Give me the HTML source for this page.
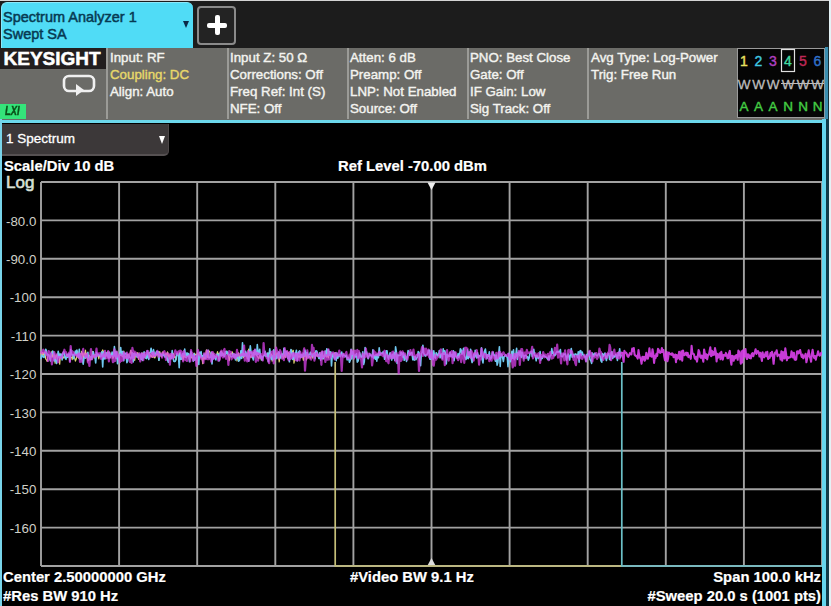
<!DOCTYPE html>
<html><head><meta charset="utf-8">
<style>
*{margin:0;padding:0;box-sizing:border-box}
html,body{width:831px;height:606px;overflow:hidden;background:#000;font-family:"Liberation Sans",sans-serif}
.abs{position:absolute}
#top{position:absolute;left:0;top:0;width:831px;height:48px;background:#1c1c1c;border-top:1px solid #d4d4d4}
#tab{position:absolute;left:1px;top:2px;width:192px;height:46px;background:#50dcf6;border-radius:6px 6px 0 0;border-top:1px solid #8ae8fa;border-left:1px solid #8ae8fa}
#tab .t{position:absolute;left:1px;color:#073a52;font-size:14.5px;white-space:nowrap;-webkit-text-stroke:0.5px #073a52}
#tab .arr{position:absolute;left:181px;top:18px;width:0;height:0;border-left:3px solid transparent;border-right:3px solid transparent;border-top:7px solid #0b2a48}
#plus{position:absolute;left:197px;top:6px;width:39px;height:39px;background:#232323;border:2px solid #8a8a8a;border-radius:4px}
#plus .h{position:absolute;left:8px;top:14.5px;width:20px;height:5px;background:#fff;border-radius:2px}
#plus .v{position:absolute;left:15.5px;top:7px;width:5px;height:20px;background:#fff;border-radius:2px}
#hdr{position:absolute;left:0;top:48px;width:827px;height:72px;background:#6b6b67}
.col{position:absolute;top:48px;height:71px;border-left:2px solid #9b9b97}
.ht{position:absolute;color:#f4f4f0;font-size:13.3px;white-space:nowrap;line-height:17px;-webkit-text-stroke:0.4px currentColor}
#ks{position:absolute;left:0;top:48px;width:106px;height:21px;background:#221e1e;color:#fff;font-weight:bold;font-size:19px;line-height:21px;padding-left:3.5px;letter-spacing:0px;-webkit-text-stroke:0.5px #fff}
#lxi{position:absolute;left:0;top:104px;width:25.5px;height:15px;background:#34e47a;color:#0a5018;font-style:italic;font-weight:bold;font-size:12px;line-height:15px;text-align:center}
#lxi span{display:inline-block;transform:scaleX(0.78);-webkit-text-stroke:0.4px #0a5018}
#trc{position:absolute;left:737px;top:48px;width:88px;height:70px;background:#050505;border:1px solid #9a9a9a}
#cyl{position:absolute;left:0;top:119.5px;width:826px;height:3.5px;background:#6cd8ec}
#cyleft{position:absolute;left:0;top:119px;width:2px;height:487px;background:#78d4ea}
#cyright{position:absolute;left:822px;top:119px;width:4px;height:487px;background:#66d6ee}
#hright{position:absolute;left:824px;top:48px;width:1px;height:71px;background:#8a9aa0}
#hright2{position:absolute;left:825px;top:47px;width:3px;height:72px;background:#3a8eb0;border-right:1px solid #183038;width:4px}
#rdark{position:absolute;left:826px;top:119px;width:3px;height:487px;background:#123a48}
#rlight{position:absolute;left:829px;top:0;width:2px;height:606px;background:#e4f2f6}
#dd{position:absolute;left:2px;top:124px;width:167px;height:32px;background:#3c3839;border-radius:0 0 5px 0;border-right:1px solid #4c4748;border-bottom:2px solid #565152}
#dd .t{position:absolute;left:4px;top:7px;color:#fff;font-size:13.5px;white-space:nowrap;-webkit-text-stroke:0.3px #fff}
#dd .arr{position:absolute;left:157px;top:12px;width:0;height:0;border-left:3.5px solid transparent;border-right:3.5px solid transparent;border-top:8px solid #fff}
.bt{position:absolute;color:#fff;font-weight:bold;font-size:14.8px;white-space:nowrap;line-height:17px;-webkit-text-stroke:0.2px #fff}
.yl{position:absolute;left:0;width:36.3px;text-align:right;color:#d0d0c8;font-size:13.3px;line-height:17px}
svg{position:absolute;left:0;top:0}
</style></head><body>
<div id="top"></div>
<div id="tab"><div class="t" style="top:6px">Spectrum Analyzer 1</div><div class="t" style="top:23px">Swept SA</div><div class="arr"></div></div>
<div id="plus"><div class="h"></div><div class="v"></div></div>
<div id="hdr"></div>
<div class="col" style="left:106px"></div>
<div class="col" style="left:227px"></div>
<div class="col" style="left:347px"></div>
<div class="col" style="left:467px"></div>
<div class="col" style="left:587px"></div>
<div id="ks">KEYSIGHT</div>
<svg width="831" height="606" style="pointer-events:none">
<rect x="64" y="76" width="30" height="15" rx="5" ry="5" fill="none" stroke="#f0f0f0" stroke-width="2.6"/>
<path d="M76 84 L84 90 L76 96 Z" fill="#f0f0f0"/>
</svg>
<div id="lxi"><span>LXI</span></div>
<div class="ht" style="left:110px;top:49px">Input: RF</div>
<div class="ht" style="left:110px;top:66px;color:#e8d86a">Coupling: DC</div>
<div class="ht" style="left:110px;top:83px">Align: Auto</div>
<div class="ht" style="left:230px;top:49px">Input Z: 50 Ω</div>
<div class="ht" style="left:230px;top:66px">Corrections: Off</div>
<div class="ht" style="left:230px;top:83px">Freq Ref: Int (S)</div>
<div class="ht" style="left:230px;top:100px">NFE: Off</div>
<div class="ht" style="left:350px;top:49px">Atten: 6 dB</div>
<div class="ht" style="left:350px;top:66px">Preamp: Off</div>
<div class="ht" style="left:350px;top:83px">LNP: Not Enabled</div>
<div class="ht" style="left:350px;top:100px">Source: Off</div>
<div class="ht" style="left:470px;top:49px">PNO: Best Close</div>
<div class="ht" style="left:470px;top:66px">Gate: Off</div>
<div class="ht" style="left:470px;top:83px">IF Gain: Low</div>
<div class="ht" style="left:470px;top:100px">Sig Track: Off</div>
<div class="ht" style="left:591px;top:49px">Avg Type: Log-Power</div>
<div class="ht" style="left:591px;top:66px">Trig: Free Run</div>
<div id="trc"></div>
<svg width="831" height="606">
<g font-family="Liberation Sans" font-size="14" stroke-width="0.4" style="paint-order:stroke">
<text x="744" y="66" fill="#e8e060" stroke="#e8e060" text-anchor="middle">1</text>
<text x="758.5" y="66" fill="#40c8e0" stroke="#40c8e0" text-anchor="middle">2</text>
<text x="773" y="66" fill="#b040c0" stroke="#b040c0" text-anchor="middle">3</text>
<text x="788" y="66" fill="#40d8a0" stroke="#40d8a0" text-anchor="middle">4</text>
<text x="803" y="66" fill="#c02858" stroke="#c02858" text-anchor="middle">5</text>
<text x="817.5" y="66" fill="#3070c8" stroke="#3070c8" text-anchor="middle">6</text>
</g>
<rect x="781.5" y="49.5" width="13" height="22" fill="none" stroke="#e0e0e0" stroke-width="1.2"/>
<g font-family="Liberation Sans" font-size="13.5" fill="#bdbdbd" text-anchor="middle" stroke="#bdbdbd" stroke-width="0.3">
<text x="744" y="88.5">W</text><text x="758.5" y="88.5">W</text><text x="773" y="88.5">W</text><text x="788" y="88.5">W</text><text x="803" y="88.5">W</text><text x="817.5" y="88.5">W</text>
</g>
<line x1="781" y1="83.5" x2="825" y2="83.5" stroke="#bdbdbd" stroke-width="1.2"/>
<g font-family="Liberation Sans" font-size="13.5" fill="#44cc44" stroke="#44cc44" stroke-width="0.4">
<text x="744" y="111" text-anchor="middle">A</text>
<text x="758.5" y="111" text-anchor="middle">A</text>
<text x="773" y="111" text-anchor="middle">A</text>
<text x="788" y="111" text-anchor="middle">N</text>
<text x="803" y="111" text-anchor="middle">N</text>
<text x="817.5" y="111" text-anchor="middle">N</text>
</g>
</svg>
<div id="cyl"></div>
<div id="cyleft"></div>
<div id="dd"><div class="t">1 Spectrum</div><div class="arr"></div></div>
<div class="bt" style="left:4px;top:157.5px">Scale/Div 10 dB</div>
<div class="abs" style="left:6px;top:173.5px;color:#d8e0d8;font-size:17px;line-height:18px;-webkit-text-stroke:0.6px currentColor">Log</div>
<div class="bt" style="left:338px;top:157.5px">Ref Level -70.00 dBm</div>
<div class="yl" style="top:212.6px">-80.0</div>
<div class="yl" style="top:251.0px">-90.0</div>
<div class="yl" style="top:289.4px">-100</div>
<div class="yl" style="top:327.8px">-110</div>
<div class="yl" style="top:366.2px">-120</div>
<div class="yl" style="top:404.6px">-130</div>
<div class="yl" style="top:443.0px">-140</div>
<div class="yl" style="top:481.4px">-150</div>
<div class="yl" style="top:519.8px">-160</div>
<svg width="831" height="606">
<g stroke="#a2a2a2" stroke-width="1.9">
<line x1="41.0" y1="182.0" x2="41.0" y2="566.0"/>
<line x1="119.1" y1="182.0" x2="119.1" y2="566.0"/>
<line x1="197.2" y1="182.0" x2="197.2" y2="566.0"/>
<line x1="275.3" y1="182.0" x2="275.3" y2="566.0"/>
<line x1="353.4" y1="182.0" x2="353.4" y2="566.0"/>
<line x1="431.5" y1="182.0" x2="431.5" y2="566.0"/>
<line x1="509.6" y1="182.0" x2="509.6" y2="566.0"/>
<line x1="587.7" y1="182.0" x2="587.7" y2="566.0"/>
<line x1="665.8" y1="182.0" x2="665.8" y2="566.0"/>
<line x1="743.9" y1="182.0" x2="743.9" y2="566.0"/>
<line x1="822.0" y1="182.0" x2="822.0" y2="566.0"/>
<line x1="41.0" y1="182.0" x2="822.0" y2="182.0"/>
<line x1="41.0" y1="220.4" x2="822.0" y2="220.4"/>
<line x1="41.0" y1="258.8" x2="822.0" y2="258.8"/>
<line x1="41.0" y1="297.2" x2="822.0" y2="297.2"/>
<line x1="41.0" y1="335.6" x2="822.0" y2="335.6"/>
<line x1="41.0" y1="374.0" x2="822.0" y2="374.0"/>
<line x1="41.0" y1="412.4" x2="822.0" y2="412.4"/>
<line x1="41.0" y1="450.8" x2="822.0" y2="450.8"/>
<line x1="41.0" y1="489.2" x2="822.0" y2="489.2"/>
<line x1="41.0" y1="527.6" x2="822.0" y2="527.6"/>
<line x1="41.0" y1="566.0" x2="822.0" y2="566.0"/>
</g>
<path d="M427.5 182.5 L435.5 182.5 L431.5 190 Z" fill="#eeeeee"/>
<path d="M427.5 565.5 L435.5 565.5 L431.5 558 Z" fill="#dddddd"/>
<defs><filter id="bl" x="-2%" y="-20%" width="104%" height="140%"><feGaussianBlur stdDeviation="0.45"/></filter></defs>
<g fill="none" stroke-width="1.6" stroke-linejoin="round" filter="url(#bl)">
<path d="M41.0 352.7 L41.8 356.4 L42.6 352.4 L43.3 355.3 L44.1 352.7 L44.9 352.5 L45.7 359.0 L46.5 360.0 L47.2 361.4 L48.0 354.8 L48.8 355.7 L49.6 356.2 L50.4 356.8 L51.2 357.1 L51.9 351.4 L52.7 357.1 L53.5 352.1 L54.3 355.5 L55.1 363.1 L55.8 355.4 L56.6 354.8 L57.4 358.5 L58.2 355.7 L59.0 353.2 L59.7 364.1 L60.5 354.3 L61.3 357.7 L62.1 354.1 L62.9 358.4 L63.6 356.9 L64.4 357.3 L65.2 356.6 L66.0 356.8 L66.8 357.8 L67.6 355.9 L68.3 354.1 L69.1 356.9 L69.9 359.0 L70.7 357.3 L71.5 357.1 L72.2 359.6 L73.0 354.7 L73.8 356.1 L74.6 357.7 L75.4 361.1 L76.1 359.6 L76.9 355.8 L77.7 351.4 L78.5 358.1 L79.3 357.1 L80.0 353.8 L80.8 357.3 L81.6 351.4 L82.4 353.4 L83.2 359.1 L84.0 353.2 L84.7 355.1 L85.5 350.0 L86.3 357.8 L87.1 353.4 L87.9 361.2 L88.6 356.9 L89.4 355.3 L90.2 359.8 L91.0 358.8 L91.8 358.8 L92.5 351.3 L93.3 353.9 L94.1 358.2 L94.9 354.7 L95.7 354.7 L96.5 355.8 L97.2 354.4 L98.0 355.0 L98.8 358.8 L99.6 355.1 L100.4 356.3 L101.1 356.0 L101.9 351.9 L102.7 349.9 L103.5 351.8 L104.3 355.9 L105.0 358.1 L105.8 356.8 L106.6 355.2 L107.4 351.9 L108.2 353.4 L108.9 358.3 L109.7 352.0 L110.5 357.5 L111.3 353.9 L112.1 353.9 L112.9 358.4 L113.6 357.1 L114.4 355.2 L115.2 353.2 L116.0 351.4 L116.8 357.1 L117.5 358.6 L118.3 356.1 L119.1 354.6 L119.9 352.9 L120.7 355.5 L121.4 355.8 L122.2 355.9 L123.0 356.8 L123.8 351.0 L124.6 357.2 L125.3 356.3 L126.1 357.8 L126.9 357.2 L127.7 354.0 L128.5 357.3 L129.3 357.5 L130.0 354.1 L130.8 350.0 L131.6 353.7 L132.4 356.1 L133.2 353.6 L133.9 353.6 L134.7 360.5 L135.5 354.9 L136.3 356.0 L137.1 355.0 L137.8 352.5 L138.6 359.3 L139.4 355.0 L140.2 355.6 L141.0 356.0 L141.7 356.1 L142.5 353.2 L143.3 353.1 L144.1 354.9 L144.9 354.1 L145.7 358.1 L146.4 355.7 L147.2 355.2 L148.0 357.6 L148.8 352.6 L149.6 353.0 L150.3 356.3 L151.1 355.0 L151.9 357.2 L152.7 357.3 L153.5 353.4 L154.2 357.6 L155.0 357.9 L155.8 354.6 L156.6 354.8 L157.4 351.3 L158.2 356.6 L158.9 360.3 L159.7 351.5 L160.5 354.6 L161.3 356.8 L162.1 353.8 L162.8 351.8 L163.6 353.1 L164.4 355.8 L165.2 354.7 L166.0 353.4 L166.7 359.0 L167.5 351.8 L168.3 355.1 L169.1 358.0 L169.9 354.6 L170.6 356.0 L171.4 358.3 L172.2 353.7 L173.0 353.4 L173.8 354.6 L174.6 357.6 L175.3 356.7 L176.1 359.8 L176.9 354.1 L177.7 354.8 L178.5 355.1 L179.2 355.2 L180.0 352.1 L180.8 357.9 L181.6 355.2 L182.4 354.7 L183.1 360.5 L183.9 354.1 L184.7 357.2 L185.5 357.3 L186.3 353.5 L187.0 355.8 L187.8 356.6 L188.6 354.4 L189.4 356.1 L190.2 357.1 L191.0 353.5 L191.7 358.0 L192.5 357.5 L193.3 357.4 L194.1 353.1 L194.9 355.0 L195.6 354.2 L196.4 355.3 L197.2 353.7 L198.0 353.3 L198.8 356.5 L199.5 354.2 L200.3 357.1 L201.1 354.3 L201.9 357.1 L202.7 363.6 L203.4 355.7 L204.2 359.2 L205.0 356.7 L205.8 353.4 L206.6 349.8 L207.4 357.5 L208.1 353.4 L208.9 350.9 L209.7 351.6 L210.5 355.4 L211.3 355.8 L212.0 357.1 L212.8 352.9 L213.6 354.6 L214.4 356.1 L215.2 356.9 L215.9 357.3 L216.7 355.0 L217.5 351.7 L218.3 356.4 L219.1 353.1 L219.8 355.0 L220.6 354.2 L221.4 351.3 L222.2 355.3 L223.0 353.2 L223.8 355.1 L224.5 355.5 L225.3 354.2 L226.1 351.1 L226.9 353.3 L227.7 353.9 L228.4 355.2 L229.2 360.6 L230.0 356.4 L230.8 353.3 L231.6 354.2 L232.3 351.8 L233.1 355.3 L233.9 354.6 L234.7 357.7 L235.5 355.6 L236.2 356.1 L237.0 361.0 L237.8 353.9 L238.6 353.0 L239.4 358.8 L240.2 355.5 L240.9 356.0 L241.7 355.4 L242.5 355.3 L243.3 357.8 L244.1 354.8 L244.8 356.2 L245.6 352.9 L246.4 354.7 L247.2 358.8 L248.0 355.3 L248.7 349.1 L249.5 353.3 L250.3 356.9 L251.1 357.7 L251.9 354.9 L252.7 355.0 L253.4 352.4 L254.2 355.0 L255.0 353.8 L255.8 353.1 L256.6 355.4 L257.3 356.2 L258.1 357.6 L258.9 358.7 L259.7 355.5 L260.5 354.8 L261.2 360.0 L262.0 357.7 L262.8 357.2 L263.6 355.2 L264.4 355.1 L265.1 353.0 L265.9 354.6 L266.7 354.8 L267.5 355.7 L268.3 356.2 L269.1 352.3 L269.8 356.7 L270.6 353.4 L271.4 354.3 L272.2 361.2 L273.0 355.4 L273.7 359.2 L274.5 358.7 L275.3 354.3 L276.1 356.9 L276.9 352.8 L277.6 353.7 L278.4 355.5 L279.2 361.9 L280.0 356.3 L280.8 355.7 L281.5 354.7 L282.3 354.0 L283.1 358.5 L283.9 357.3 L284.7 353.7 L285.5 357.4 L286.2 355.2 L287.0 351.1 L287.8 356.7 L288.6 352.5 L289.4 353.9 L290.1 356.3 L290.9 351.6 L291.7 349.8 L292.5 355.4 L293.3 350.3 L294.0 363.2 L294.8 358.2 L295.6 353.1 L296.4 354.5 L297.2 355.6 L297.9 354.6 L298.7 357.2 L299.5 356.5 L300.3 355.2 L301.1 356.8 L301.9 354.7 L302.6 356.4 L303.4 360.3 L304.2 352.8 L305.0 356.1 L305.8 353.6 L306.5 360.0 L307.3 353.6 L308.1 354.0 L308.9 357.1 L309.7 356.5 L310.4 358.3 L311.2 357.0 L312.0 353.0 L312.8 358.2 L313.6 354.2 L314.4 352.6 L315.1 354.7 L315.9 355.8 L316.7 354.7 L317.5 356.3 L318.3 356.0 L319.0 358.3 L319.8 357.2 L320.6 354.5 L321.4 354.1 L322.2 351.6 L322.9 355.0 L323.7 358.9 L324.5 354.8 L325.3 354.8 L326.1 352.0 L326.8 357.1 L327.6 352.5 L328.4 357.9 L329.2 351.3 L330.0 351.9 L330.8 355.0 L331.5 354.4 L332.3 356.1 L333.1 354.5 L333.9 356.5 L334.7 352.3" stroke="#e0d870" stroke-width="1.2"/>
<path d="M41.0 359.1 L41.8 355.0 L42.6 356.2 L43.3 357.1 L44.1 357.4 L44.9 353.9 L45.7 349.2 L46.5 350.8 L47.2 355.2 L48.0 354.5 L48.8 354.7 L49.6 357.5 L50.4 360.9 L51.2 353.3 L51.9 354.0 L52.7 351.1 L53.5 353.2 L54.3 361.0 L55.1 359.5 L55.8 360.4 L56.6 363.5 L57.4 356.8 L58.2 351.4 L59.0 355.3 L59.7 358.0 L60.5 354.0 L61.3 354.2 L62.1 359.9 L62.9 353.6 L63.6 351.8 L64.4 353.3 L65.2 358.3 L66.0 359.4 L66.8 354.3 L67.6 357.2 L68.3 354.2 L69.1 354.0 L69.9 361.1 L70.7 349.6 L71.5 354.2 L72.2 355.1 L73.0 354.5 L73.8 358.8 L74.6 353.7 L75.4 351.0 L76.1 354.8 L76.9 350.1 L77.7 356.4 L78.5 356.8 L79.3 349.4 L80.0 359.5 L80.8 356.0 L81.6 358.0 L82.4 360.1 L83.2 364.1 L84.0 357.8 L84.7 356.0 L85.5 358.1 L86.3 355.2 L87.1 357.0 L87.9 352.4 L88.6 360.1 L89.4 358.7 L90.2 357.1 L91.0 356.6 L91.8 359.3 L92.5 354.7 L93.3 351.8 L94.1 355.4 L94.9 356.7 L95.7 363.0 L96.5 352.4 L97.2 354.7 L98.0 354.3 L98.8 355.5 L99.6 355.2 L100.4 356.9 L101.1 353.5 L101.9 351.8 L102.7 366.9 L103.5 352.0 L104.3 358.8 L105.0 358.9 L105.8 352.8 L106.6 353.3 L107.4 355.3 L108.2 357.6 L108.9 352.1 L109.7 357.7 L110.5 355.1 L111.3 355.7 L112.1 352.1 L112.9 356.1 L113.6 356.4 L114.4 346.6 L115.2 354.5 L116.0 358.5 L116.8 352.0 L117.5 363.7 L118.3 356.6 L119.1 356.9 L119.9 354.1 L120.7 347.5 L121.4 355.3 L122.2 351.5 L123.0 351.6 L123.8 360.6 L124.6 353.5 L125.3 353.8 L126.1 353.1 L126.9 362.8 L127.7 361.0 L128.5 354.9 L129.3 357.0 L130.0 357.2 L130.8 359.0 L131.6 356.6 L132.4 352.8 L133.2 361.9 L133.9 354.7 L134.7 353.1 L135.5 355.3 L136.3 354.1 L137.1 357.2 L137.8 356.2 L138.6 354.0 L139.4 354.2 L140.2 355.5 L141.0 359.4 L141.7 353.2 L142.5 360.4 L143.3 357.1 L144.1 351.9 L144.9 357.6 L145.7 357.6 L146.4 358.6 L147.2 350.7 L148.0 357.2 L148.8 359.5 L149.6 353.3 L150.3 352.5 L151.1 348.2 L151.9 353.5 L152.7 354.8 L153.5 349.6 L154.2 353.3 L155.0 356.0 L155.8 353.1 L156.6 351.4 L157.4 353.5 L158.2 351.8 L158.9 360.3 L159.7 353.4 L160.5 354.3 L161.3 355.4 L162.1 354.5 L162.8 355.8 L163.6 353.8 L164.4 355.7 L165.2 357.3 L166.0 355.5 L166.7 356.0 L167.5 359.9 L168.3 362.3 L169.1 358.1 L169.9 357.4 L170.6 359.0 L171.4 357.5 L172.2 350.5 L173.0 357.1 L173.8 361.3 L174.6 361.6 L175.3 361.3 L176.1 358.2 L176.9 353.3 L177.7 353.3 L178.5 356.2 L179.2 367.7 L180.0 353.1 L180.8 359.1 L181.6 359.1 L182.4 353.7 L183.1 353.6 L183.9 355.0 L184.7 349.1 L185.5 356.5 L186.3 357.6 L187.0 352.8 L187.8 356.1 L188.6 353.5 L189.4 361.6 L190.2 357.1 L191.0 351.6 L191.7 356.1 L192.5 355.1 L193.3 361.2 L194.1 353.7 L194.9 360.2 L195.6 358.8 L196.4 357.4 L197.2 354.5 L198.0 356.4 L198.8 364.4 L199.5 352.2 L200.3 357.0 L201.1 351.6 L201.9 357.4 L202.7 355.8 L203.4 356.3 L204.2 354.0 L205.0 355.9 L205.8 358.6 L206.6 354.1 L207.4 353.4 L208.1 350.3 L208.9 358.0 L209.7 357.5 L210.5 357.5 L211.3 352.2 L212.0 363.9 L212.8 354.4 L213.6 358.7 L214.4 356.0 L215.2 357.4 L215.9 359.9 L216.7 354.5 L217.5 354.1 L218.3 354.7 L219.1 360.9 L219.8 355.5 L220.6 351.7 L221.4 355.8 L222.2 353.0 L223.0 355.1 L223.8 356.1 L224.5 356.5 L225.3 351.7 L226.1 354.1 L226.9 351.3 L227.7 352.6 L228.4 354.8 L229.2 355.1 L230.0 354.4 L230.8 356.6 L231.6 356.9 L232.3 356.5 L233.1 353.5 L233.9 357.1 L234.7 354.2 L235.5 359.9 L236.2 354.3 L237.0 357.9 L237.8 354.7 L238.6 361.2 L239.4 360.5 L240.2 358.0 L240.9 350.7 L241.7 358.4 L242.5 342.9 L243.3 356.1 L244.1 354.2 L244.8 356.1 L245.6 351.4 L246.4 355.9 L247.2 353.1 L248.0 358.6 L248.7 361.1 L249.5 353.1 L250.3 345.8 L251.1 353.1 L251.9 352.7 L252.7 357.7 L253.4 360.0 L254.2 352.4 L255.0 349.6 L255.8 354.1 L256.6 355.5 L257.3 344.6 L258.1 354.4 L258.9 353.0 L259.7 349.2 L260.5 357.6 L261.2 356.1 L262.0 360.1 L262.8 356.7 L263.6 356.3 L264.4 355.5 L265.1 351.4 L265.9 356.4 L266.7 356.5 L267.5 353.0 L268.3 361.8 L269.1 355.0 L269.8 348.7 L270.6 356.9 L271.4 359.4 L272.2 356.1 L273.0 359.9 L273.7 349.7 L274.5 357.4 L275.3 356.0 L276.1 358.7 L276.9 354.6 L277.6 357.8 L278.4 352.1 L279.2 352.1 L280.0 357.9 L280.8 358.0 L281.5 354.0 L282.3 355.2 L283.1 356.3 L283.9 348.3 L284.7 349.8 L285.5 355.4 L286.2 351.9 L287.0 353.0 L287.8 358.4 L288.6 355.9 L289.4 361.8 L290.1 355.0 L290.9 349.5 L291.7 353.0 L292.5 359.4 L293.3 352.6 L294.0 359.0 L294.8 358.1 L295.6 353.7 L296.4 350.2 L297.2 360.8 L297.9 354.6 L298.7 351.9 L299.5 350.9 L300.3 357.8 L301.1 354.8 L301.9 357.1 L302.6 355.4 L303.4 353.6 L304.2 356.4 L305.0 350.1 L305.8 355.8 L306.5 352.7 L307.3 352.4 L308.1 357.5 L308.9 355.1 L309.7 354.4 L310.4 352.3 L311.2 355.8 L312.0 354.7 L312.8 356.3 L313.6 354.1 L314.4 353.8 L315.1 358.7 L315.9 350.9 L316.7 351.0 L317.5 352.8 L318.3 356.4 L319.0 358.4 L319.8 352.9 L320.6 360.2 L321.4 357.9 L322.2 352.0 L322.9 358.9 L323.7 357.7 L324.5 356.9 L325.3 351.0 L326.1 356.1 L326.8 348.7 L327.6 355.3 L328.4 349.8 L329.2 355.4 L330.0 352.2 L330.8 351.9 L331.5 365.9 L332.3 354.5 L333.1 353.4 L333.9 357.3 L334.7 358.8 L335.4 352.9 L336.2 360.6 L337.0 353.0 L337.8 358.2 L338.6 355.4 L339.3 354.3 L340.1 356.7 L340.9 353.9 L341.7 352.0 L342.5 356.7 L343.2 354.0 L344.0 355.5 L344.8 355.6 L345.6 356.7 L346.4 355.2 L347.2 359.9 L347.9 357.5 L348.7 358.7 L349.5 362.2 L350.3 360.2 L351.1 349.2 L351.8 358.9 L352.6 351.7 L353.4 353.6 L354.2 355.5 L355.0 357.3 L355.7 354.9 L356.5 353.7 L357.3 362.1 L358.1 361.1 L358.9 357.2 L359.6 352.5 L360.4 355.8 L361.2 357.4 L362.0 356.1 L362.8 351.8 L363.6 364.5 L364.3 361.7 L365.1 347.6 L365.9 353.7 L366.7 352.0 L367.5 356.8 L368.2 358.8 L369.0 356.1 L369.8 353.8 L370.6 355.3 L371.4 355.9 L372.1 357.1 L372.9 349.8 L373.7 358.1 L374.5 355.5 L375.3 359.1 L376.0 354.6 L376.8 361.1 L377.6 354.2 L378.4 357.8 L379.2 347.8 L380.0 355.1 L380.7 353.5 L381.5 353.0 L382.3 353.7 L383.1 351.7 L383.9 353.6 L384.6 359.3 L385.4 357.6 L386.2 350.9 L387.0 350.7 L387.8 357.3 L388.5 359.1 L389.3 355.7 L390.1 352.7 L390.9 357.0 L391.7 360.1 L392.4 354.3 L393.2 357.9 L394.0 352.7 L394.8 360.3 L395.6 346.9 L396.4 352.0 L397.1 363.4 L397.9 355.0 L398.7 355.5 L399.5 355.5 L400.3 355.3 L401.0 352.2 L401.8 353.0 L402.6 357.0 L403.4 352.7 L404.2 360.3 L404.9 355.1 L405.7 357.4 L406.5 361.4 L407.3 356.1 L408.1 350.5 L408.9 352.1 L409.6 355.1 L410.4 354.2 L411.2 352.6 L412.0 352.5 L412.8 359.8 L413.5 356.3 L414.3 360.1 L415.1 356.5 L415.9 359.7 L416.7 358.0 L417.4 357.2 L418.2 351.6 L419.0 352.3 L419.8 359.3 L420.6 365.7 L421.3 353.6 L422.1 352.5 L422.9 345.3 L423.7 353.6 L424.5 354.4 L425.3 356.1 L426.0 354.9 L426.8 354.3 L427.6 354.0 L428.4 350.5 L429.2 350.1 L429.9 359.2 L430.7 359.2 L431.5 350.4 L432.3 357.3 L433.1 359.6 L433.8 350.9 L434.6 357.0 L435.4 358.2 L436.2 352.7 L437.0 353.9 L437.7 355.8 L438.5 355.5 L439.3 350.5 L440.1 357.8 L440.9 354.2 L441.7 354.0 L442.4 358.7 L443.2 348.7 L444.0 354.3 L444.8 350.7 L445.6 354.5 L446.3 363.9 L447.1 354.4 L447.9 356.9 L448.7 355.3 L449.5 356.1 L450.2 352.2 L451.0 356.3 L451.8 354.5 L452.6 357.5 L453.4 350.8 L454.1 360.7 L454.9 352.1 L455.7 355.9 L456.5 356.6 L457.3 358.2 L458.1 353.6 L458.8 357.4 L459.6 355.1 L460.4 348.7 L461.2 350.2 L462.0 354.3 L462.7 352.3 L463.5 348.4 L464.3 355.4 L465.1 357.3 L465.9 359.4 L466.6 358.5 L467.4 349.9 L468.2 358.6 L469.0 352.3 L469.8 357.1 L470.6 349.3 L471.3 358.5 L472.1 362.5 L472.9 357.9 L473.7 354.3 L474.5 357.4 L475.2 350.4 L476.0 355.4 L476.8 357.9 L477.6 352.8 L478.4 357.6 L479.1 355.4 L479.9 356.4 L480.7 355.4 L481.5 347.9 L482.3 359.6 L483.0 362.9 L483.8 354.7 L484.6 351.2 L485.4 349.0 L486.2 355.2 L487.0 358.5 L487.7 354.8 L488.5 356.2 L489.3 351.8 L490.1 359.3 L490.9 358.5 L491.6 357.2 L492.4 352.9 L493.2 352.1 L494.0 355.6 L494.8 355.4 L495.5 361.3 L496.3 355.0 L497.1 365.1 L497.9 362.2 L498.7 354.0 L499.4 346.7 L500.2 366.4 L501.0 354.0 L501.8 354.4 L502.6 357.7 L503.4 361.5 L504.1 356.7 L504.9 356.0 L505.7 354.8 L506.5 356.4 L507.3 357.4 L508.0 366.7 L508.8 353.2 L509.6 354.4 L510.4 361.6 L511.2 359.2 L511.9 351.4 L512.7 358.3 L513.5 349.9 L514.3 359.6 L515.1 358.0 L515.8 355.4 L516.6 348.3 L517.4 359.4 L518.2 353.5 L519.0 352.0 L519.8 355.6 L520.5 351.0 L521.3 357.4 L522.1 352.4 L522.9 354.4 L523.7 358.8 L524.4 355.9 L525.2 355.4 L526.0 355.3 L526.8 357.5 L527.6 356.7 L528.3 360.1 L529.1 358.1 L529.9 353.5 L530.7 352.4 L531.5 351.2 L532.2 356.6 L533.0 352.7 L533.8 349.4 L534.6 355.5 L535.4 355.6 L536.2 360.8 L536.9 355.2 L537.7 357.5 L538.5 358.5 L539.3 357.2 L540.1 351.6 L540.8 360.1 L541.6 357.1 L542.4 358.3 L543.2 355.0 L544.0 355.7 L544.7 356.4 L545.5 356.6 L546.3 357.3 L547.1 358.4 L547.9 359.5 L548.6 356.1 L549.4 359.8 L550.2 355.5 L551.0 355.2 L551.8 348.5 L552.6 353.6 L553.3 352.2 L554.1 355.7 L554.9 355.6 L555.7 353.7 L556.5 352.2 L557.2 351.3 L558.0 352.5 L558.8 351.3 L559.6 352.7 L560.4 349.5 L561.1 356.2 L561.9 356.5 L562.7 356.6 L563.5 354.1 L564.3 354.4 L565.1 353.8 L565.8 356.1 L566.6 360.2 L567.4 356.4 L568.2 354.0 L569.0 357.1 L569.7 360.0 L570.5 353.0 L571.3 348.5 L572.1 357.2 L572.9 354.2 L573.6 354.8 L574.4 356.9 L575.2 353.9 L576.0 354.2 L576.8 354.8 L577.5 357.2 L578.3 351.7 L579.1 362.1 L579.9 351.2 L580.7 350.5 L581.5 355.6 L582.2 352.0 L583.0 354.8 L583.8 355.2 L584.6 356.8 L585.4 356.3 L586.1 361.4 L586.9 354.5 L587.7 354.1 L588.5 355.4 L589.3 351.6 L590.0 359.6 L590.8 360.6 L591.6 363.4 L592.4 353.0 L593.2 354.6 L593.9 356.4 L594.7 353.2 L595.5 354.1 L596.3 355.4 L597.1 355.9 L597.9 355.0 L598.6 353.5 L599.4 353.8 L600.2 356.5 L601.0 360.9 L601.8 362.2 L602.5 353.5 L603.3 356.4 L604.1 354.8 L604.9 353.0 L605.7 357.3 L606.4 360.5 L607.2 355.9 L608.0 353.9 L608.8 353.4 L609.6 359.6 L610.3 359.8 L611.1 352.7 L611.9 351.7 L612.7 358.5 L613.5 355.5 L614.3 357.0 L615.0 356.5 L615.8 354.3 L616.6 355.6 L617.4 360.4 L618.2 352.6 L618.9 355.4 L619.7 348.7 L620.5 357.3 L621.3 354.5" stroke="#70c8f0" stroke-width="1.6"/>
<path d="M41.0 351.2 L41.8 353.4 L42.6 351.4 L43.3 349.7 L44.1 352.8 L44.9 351.7 L45.7 351.9 L46.5 354.8 L47.2 354.6 L48.0 361.0 L48.8 351.2 L49.6 352.0 L50.4 359.4 L51.2 353.6 L51.9 364.4 L52.7 358.8 L53.5 360.0 L54.3 352.1 L55.1 355.7 L55.8 358.2 L56.6 354.4 L57.4 358.7 L58.2 362.3 L59.0 356.9 L59.7 356.9 L60.5 356.9 L61.3 358.1 L62.1 356.5 L62.9 353.4 L63.6 352.4 L64.4 349.7 L65.2 352.6 L66.0 352.2 L66.8 355.9 L67.6 355.9 L68.3 355.1 L69.1 352.7 L69.9 362.0 L70.7 346.1 L71.5 355.6 L72.2 351.1 L73.0 352.2 L73.8 352.9 L74.6 355.4 L75.4 354.8 L76.1 355.6 L76.9 354.8 L77.7 356.9 L78.5 353.5 L79.3 353.6 L80.0 361.8 L80.8 354.1 L81.6 361.6 L82.4 352.4 L83.2 348.9 L84.0 355.0 L84.7 355.7 L85.5 357.0 L86.3 353.5 L87.1 354.5 L87.9 362.5 L88.6 358.9 L89.4 365.8 L90.2 355.4 L91.0 349.0 L91.8 359.4 L92.5 356.2 L93.3 355.7 L94.1 355.7 L94.9 357.1 L95.7 355.1 L96.5 348.7 L97.2 356.1 L98.0 355.0 L98.8 353.3 L99.6 353.4 L100.4 353.4 L101.1 358.9 L101.9 357.5 L102.7 356.6 L103.5 354.0 L104.3 356.4 L105.0 350.8 L105.8 357.9 L106.6 358.2 L107.4 357.0 L108.2 351.0 L108.9 361.5 L109.7 353.4 L110.5 357.4 L111.3 357.4 L112.1 356.0 L112.9 362.2 L113.6 361.6 L114.4 349.4 L115.2 360.9 L116.0 356.6 L116.8 351.6 L117.5 356.5 L118.3 354.5 L119.1 357.7 L119.9 362.2 L120.7 354.3 L121.4 360.9 L122.2 356.0 L123.0 360.5 L123.8 352.3 L124.6 356.7 L125.3 358.1 L126.1 357.5 L126.9 352.6 L127.7 358.1 L128.5 355.6 L129.3 354.0 L130.0 361.8 L130.8 351.2 L131.6 363.0 L132.4 347.9 L133.2 352.2 L133.9 358.5 L134.7 351.5 L135.5 355.7 L136.3 352.8 L137.1 354.7 L137.8 355.7 L138.6 358.1 L139.4 353.4 L140.2 361.5 L141.0 356.2 L141.7 353.4 L142.5 355.6 L143.3 360.1 L144.1 353.5 L144.9 356.9 L145.7 352.9 L146.4 354.7 L147.2 350.9 L148.0 351.1 L148.8 353.8 L149.6 357.8 L150.3 356.2 L151.1 354.5 L151.9 352.9 L152.7 357.0 L153.5 352.3 L154.2 355.3 L155.0 356.0 L155.8 355.7 L156.6 354.2 L157.4 350.9 L158.2 352.7 L158.9 356.8 L159.7 355.1 L160.5 353.7 L161.3 353.5 L162.1 357.6 L162.8 353.0 L163.6 352.4 L164.4 351.1 L165.2 354.5 L166.0 360.0 L166.7 353.3 L167.5 353.5 L168.3 353.5 L169.1 357.0 L169.9 364.7 L170.6 354.0 L171.4 353.9 L172.2 358.4 L173.0 354.9 L173.8 357.5 L174.6 354.7 L175.3 350.3 L176.1 353.4 L176.9 352.2 L177.7 354.4 L178.5 351.4 L179.2 352.0 L180.0 350.5 L180.8 350.7 L181.6 356.5 L182.4 352.4 L183.1 361.4 L183.9 351.0 L184.7 354.3 L185.5 360.2 L186.3 356.9 L187.0 361.0 L187.8 356.6 L188.6 356.8 L189.4 355.7 L190.2 361.5 L191.0 350.0 L191.7 353.8 L192.5 353.4 L193.3 360.6 L194.1 356.5 L194.9 358.5 L195.6 355.9 L196.4 365.9 L197.2 356.6 L198.0 350.2 L198.8 354.3 L199.5 354.5 L200.3 355.4 L201.1 358.7 L201.9 357.8 L202.7 359.5 L203.4 362.8 L204.2 353.3 L205.0 357.3 L205.8 359.0 L206.6 350.7 L207.4 359.1 L208.1 350.5 L208.9 359.1 L209.7 358.8 L210.5 355.2 L211.3 361.6 L212.0 352.4 L212.8 352.1 L213.6 358.8 L214.4 353.9 L215.2 357.2 L215.9 355.1 L216.7 356.6 L217.5 356.3 L218.3 360.6 L219.1 358.0 L219.8 359.7 L220.6 352.4 L221.4 350.7 L222.2 355.8 L223.0 357.5 L223.8 350.4 L224.5 348.9 L225.3 356.9 L226.1 358.8 L226.9 355.9 L227.7 355.5 L228.4 364.9 L229.2 351.0 L230.0 356.0 L230.8 351.9 L231.6 359.4 L232.3 355.9 L233.1 357.6 L233.9 353.8 L234.7 357.9 L235.5 358.2 L236.2 356.3 L237.0 349.9 L237.8 355.8 L238.6 353.7 L239.4 354.7 L240.2 355.6 L240.9 355.4 L241.7 354.1 L242.5 355.2 L243.3 353.4 L244.1 345.6 L244.8 360.7 L245.6 354.1 L246.4 354.3 L247.2 361.5 L248.0 351.0 L248.7 360.9 L249.5 357.8 L250.3 352.2 L251.1 356.7 L251.9 352.1 L252.7 355.7 L253.4 351.1 L254.2 356.5 L255.0 349.5 L255.8 361.8 L256.6 352.5 L257.3 353.1 L258.1 360.6 L258.9 353.6 L259.7 354.1 L260.5 357.7 L261.2 357.9 L262.0 354.1 L262.8 360.5 L263.6 343.1 L264.4 354.5 L265.1 352.6 L265.9 354.2 L266.7 358.1 L267.5 358.4 L268.3 360.8 L269.1 363.1 L269.8 355.1 L270.6 356.5 L271.4 352.2 L272.2 351.5 L273.0 351.4 L273.7 363.3 L274.5 357.7 L275.3 357.3 L276.1 347.7 L276.9 350.8 L277.6 352.0 L278.4 358.7 L279.2 354.6 L280.0 350.1 L280.8 351.9 L281.5 354.9 L282.3 358.7 L283.1 355.7 L283.9 360.1 L284.7 348.2 L285.5 357.1 L286.2 356.2 L287.0 351.1 L287.8 357.0 L288.6 360.1 L289.4 352.2 L290.1 359.0 L290.9 354.4 L291.7 358.2 L292.5 354.9 L293.3 353.0 L294.0 356.2 L294.8 353.5 L295.6 360.1 L296.4 354.1 L297.2 360.7 L297.9 353.4 L298.7 356.5 L299.5 360.4 L300.3 351.9 L301.1 356.3 L301.9 357.2 L302.6 354.4 L303.4 352.1 L304.2 348.4 L305.0 370.6 L305.8 360.1 L306.5 358.1 L307.3 350.3 L308.1 357.9 L308.9 355.3 L309.7 356.9 L310.4 359.0 L311.2 359.5 L312.0 344.8 L312.8 354.5 L313.6 347.8 L314.4 360.6 L315.1 354.2 L315.9 355.9 L316.7 352.6 L317.5 355.2 L318.3 356.4 L319.0 355.6 L319.8 356.2 L320.6 352.8 L321.4 364.8 L322.2 351.4 L322.9 353.5 L323.7 356.9 L324.5 351.5 L325.3 362.0 L326.1 357.9 L326.8 355.2 L327.6 359.7 L328.4 349.4 L329.2 359.4 L330.0 357.5 L330.8 357.1 L331.5 353.2 L332.3 353.2 L333.1 352.3 L333.9 353.5 L334.7 359.3 L335.4 358.6 L336.2 352.8 L337.0 355.6 L337.8 355.2 L338.6 355.4 L339.3 350.5 L340.1 355.5 L340.9 355.2 L341.7 370.9 L342.5 356.6 L343.2 353.7 L344.0 357.2 L344.8 354.2 L345.6 353.9 L346.4 352.0 L347.2 358.7 L347.9 356.9 L348.7 358.5 L349.5 354.6 L350.3 358.4 L351.1 350.1 L351.8 353.9 L352.6 350.5 L353.4 353.7 L354.2 358.3 L355.0 350.7 L355.7 355.1 L356.5 352.5 L357.3 350.0 L358.1 358.1 L358.9 351.2 L359.6 356.5 L360.4 358.0 L361.2 359.7 L362.0 367.4 L362.8 353.7 L363.6 358.1 L364.3 355.7 L365.1 356.9 L365.9 348.5 L366.7 356.5 L367.5 354.0 L368.2 358.0 L369.0 353.5 L369.8 354.4 L370.6 355.5 L371.4 355.2 L372.1 365.4 L372.9 359.0 L373.7 350.7 L374.5 355.0 L375.3 352.4 L376.0 355.2 L376.8 353.6 L377.6 353.9 L378.4 355.5 L379.2 351.8 L380.0 352.8 L380.7 353.8 L381.5 355.2 L382.3 353.6 L383.1 356.3 L383.9 352.7 L384.6 350.7 L385.4 355.5 L386.2 361.2 L387.0 354.9 L387.8 361.0 L388.5 363.3 L389.3 356.0 L390.1 357.9 L390.9 353.6 L391.7 358.3 L392.4 351.9 L393.2 351.7 L394.0 357.6 L394.8 356.0 L395.6 361.3 L396.4 353.1 L397.1 356.4 L397.9 356.7 L398.7 373.5 L399.5 352.9 L400.3 351.5 L401.0 360.9 L401.8 359.7 L402.6 351.3 L403.4 354.8 L404.2 353.9 L404.9 353.4 L405.7 357.8 L406.5 357.1 L407.3 359.7 L408.1 356.3 L408.9 352.9 L409.6 354.0 L410.4 350.0 L411.2 355.2 L412.0 355.0 L412.8 353.2 L413.5 349.5 L414.3 356.7 L415.1 358.9 L415.9 356.1 L416.7 354.7 L417.4 354.5 L418.2 354.1 L419.0 371.0 L419.8 356.9 L420.6 353.8 L421.3 350.8 L422.1 347.1 L422.9 355.9 L423.7 348.3 L424.5 349.9 L425.3 354.4 L426.0 348.6 L426.8 355.5 L427.6 354.3 L428.4 349.7 L429.2 357.4 L429.9 353.6 L430.7 357.6 L431.5 350.6 L432.3 355.1 L433.1 364.9 L433.8 365.6 L434.6 358.4 L435.4 354.8 L436.2 359.6 L437.0 357.8 L437.7 357.4 L438.5 355.8 L439.3 354.2 L440.1 350.8 L440.9 349.5 L441.7 354.1 L442.4 359.6 L443.2 357.5 L444.0 352.9 L444.8 365.1 L445.6 356.5 L446.3 357.4 L447.1 350.2 L447.9 358.7 L448.7 360.5 L449.5 354.6 L450.2 352.3 L451.0 356.3 L451.8 351.1 L452.6 363.1 L453.4 352.2 L454.1 357.0 L454.9 352.9 L455.7 352.5 L456.5 357.8 L457.3 358.0 L458.1 360.2 L458.8 356.5 L459.6 358.3 L460.4 354.7 L461.2 362.1 L462.0 356.5 L462.7 351.3 L463.5 355.4 L464.3 362.8 L465.1 347.9 L465.9 347.7 L466.6 348.3 L467.4 348.8 L468.2 355.3 L469.0 352.2 L469.8 352.1 L470.6 357.9 L471.3 350.8 L472.1 352.5 L472.9 357.3 L473.7 360.6 L474.5 353.1 L475.2 354.0 L476.0 353.4 L476.8 350.2 L477.6 357.2 L478.4 355.8 L479.1 364.7 L479.9 356.0 L480.7 359.4 L481.5 348.6 L482.3 351.7 L483.0 353.7 L483.8 357.4 L484.6 354.1 L485.4 354.1 L486.2 358.8 L487.0 355.9 L487.7 355.1 L488.5 355.1 L489.3 361.1 L490.1 356.1 L490.9 357.6 L491.6 360.7 L492.4 351.8 L493.2 355.1 L494.0 357.8 L494.8 359.4 L495.5 359.0 L496.3 352.9 L497.1 357.7 L497.9 358.3 L498.7 352.2 L499.4 356.1 L500.2 352.1 L501.0 355.5 L501.8 355.7 L502.6 354.1 L503.4 352.3 L504.1 353.5 L504.9 355.4 L505.7 355.6 L506.5 355.3 L507.3 355.8 L508.0 353.9 L508.8 354.3 L509.6 359.4 L510.4 358.1 L511.2 354.5 L511.9 359.6 L512.7 367.5 L513.5 363.5 L514.3 354.0 L515.1 365.8 L515.8 354.3 L516.6 357.9 L517.4 353.5 L518.2 355.7 L519.0 350.8 L519.8 365.0 L520.5 357.2 L521.3 349.2 L522.1 349.1 L522.9 354.4 L523.7 360.7 L524.4 352.5 L525.2 352.6 L526.0 358.1 L526.8 349.8 L527.6 353.1 L528.3 352.9 L529.1 352.5 L529.9 352.4 L530.7 352.5 L531.5 350.9 L532.2 346.8 L533.0 358.4 L533.8 356.5 L534.6 355.1 L535.4 353.3 L536.2 356.2 L536.9 357.1 L537.7 354.6 L538.5 353.2 L539.3 355.3 L540.1 362.8 L540.8 355.1 L541.6 355.4 L542.4 357.0 L543.2 352.1 L544.0 355.1 L544.7 357.3 L545.5 354.6 L546.3 356.4 L547.1 357.4 L547.9 353.9 L548.6 360.1 L549.4 354.8 L550.2 352.1 L551.0 354.8 L551.8 358.6 L552.6 356.2 L553.3 357.8 L554.1 353.1 L554.9 347.9 L555.7 351.6 L556.5 354.0 L557.2 344.7 L558.0 357.7 L558.8 352.5 L559.6 356.5 L560.4 357.3 L561.1 363.4 L561.9 353.5 L562.7 355.7 L563.5 353.4 L564.3 360.5 L565.1 350.3 L565.8 356.1 L566.6 359.7 L567.4 364.3 L568.2 350.2 L569.0 349.9 L569.7 350.7 L570.5 352.8 L571.3 350.9 L572.1 351.7 L572.9 356.1 L573.6 359.8 L574.4 356.1 L575.2 362.8 L576.0 365.1 L576.8 355.6 L577.5 357.8 L578.3 356.5 L579.1 359.4 L579.9 354.5 L580.7 354.1 L581.5 358.3 L582.2 359.0 L583.0 356.9 L583.8 357.1 L584.6 354.9 L585.4 358.8 L586.1 361.4 L586.9 355.8 L587.7 356.7 L588.5 355.2 L589.3 351.2 L590.0 350.8 L590.8 355.9 L591.6 353.0 L592.4 361.3 L593.2 356.1 L593.9 357.2 L594.7 357.6 L595.5 353.3 L596.3 353.2 L597.1 358.9 L597.9 357.2 L598.6 355.7 L599.4 348.5 L600.2 352.0 L601.0 352.0 L601.8 357.8 L602.5 356.0 L603.3 360.0 L604.1 357.6 L604.9 357.6 L605.7 353.8 L606.4 355.4 L607.2 357.8 L608.0 352.7 L608.8 353.8 L609.6 344.9 L610.3 347.7 L611.1 360.1 L611.9 352.7 L612.7 357.0 L613.5 353.5 L614.3 349.7 L615.0 354.8 L615.8 353.4 L616.6 357.7 L617.4 353.1 L618.2 358.2 L618.9 352.3 L619.7 358.5 L620.5 353.7 L621.3 352.8 L622.1 351.9" stroke="#d840e8" stroke-width="2.2" stroke-opacity="0.75"/>
<path d="M622.1 351.9 L622.8 356.4 L623.6 361.8 L624.4 350.9 L625.2 352.8 L626.0 352.6 L626.8 353.8 L627.5 356.2 L628.3 356.8 L629.1 355.3 L629.9 353.2 L630.7 354.3 L631.4 354.4 L632.2 348.6 L633.0 350.9 L633.8 348.1 L634.6 354.8 L635.3 355.5 L636.1 356.0 L636.9 356.9 L637.7 358.6 L638.5 350.1 L639.2 355.1 L640.0 357.7 L640.8 359.1 L641.6 363.7 L642.4 356.9 L643.2 359.3 L643.9 356.8 L644.7 360.8 L645.5 359.3 L646.3 352.9 L647.1 355.8 L647.8 358.8 L648.6 355.5 L649.4 348.4 L650.2 355.8 L651.0 356.1 L651.7 356.7 L652.5 349.2 L653.3 353.8 L654.1 363.0 L654.9 355.9 L655.6 358.1 L656.4 353.9 L657.2 356.0 L658.0 348.8 L658.8 350.0 L659.6 352.3 L660.3 352.9 L661.1 352.0 L661.9 348.1 L662.7 352.0 L663.5 350.0 L664.2 356.3 L665.0 360.3 L665.8 357.2 L666.6 351.7 L667.4 361.3 L668.1 358.2 L668.9 352.5 L669.7 353.6 L670.5 354.1 L671.3 354.8 L672.0 353.3 L672.8 353.9 L673.6 357.2 L674.4 356.4 L675.2 354.5 L676.0 362.1 L676.7 355.0 L677.5 358.6 L678.3 357.3 L679.1 351.9 L679.9 359.5 L680.6 358.8 L681.4 351.3 L682.2 360.7 L683.0 350.5 L683.8 353.9 L684.5 355.2 L685.3 353.8 L686.1 352.7 L686.9 355.5 L687.7 352.9 L688.4 357.1 L689.2 355.6 L690.0 356.4 L690.8 358.8 L691.6 345.8 L692.4 353.6 L693.1 353.6 L693.9 354.3 L694.7 357.9 L695.5 359.1 L696.3 356.8 L697.0 361.6 L697.8 356.9 L698.6 350.1 L699.4 352.1 L700.2 357.1 L700.9 357.8 L701.7 355.5 L702.5 357.8 L703.3 361.6 L704.1 349.5 L704.9 353.7 L705.6 357.9 L706.4 354.2 L707.2 359.4 L708.0 355.1 L708.8 354.9 L709.5 351.6 L710.3 347.4 L711.1 356.2 L711.9 350.8 L712.7 355.3 L713.4 352.0 L714.2 354.7 L715.0 348.1 L715.8 352.2 L716.6 361.4 L717.3 353.7 L718.1 357.6 L718.9 356.6 L719.7 353.3 L720.5 359.3 L721.3 351.9 L722.0 355.5 L722.8 359.6 L723.6 355.0 L724.4 355.1 L725.2 355.8 L725.9 352.9 L726.7 354.4 L727.5 358.2 L728.3 358.1 L729.1 352.9 L729.8 350.9 L730.6 359.4 L731.4 364.7 L732.2 355.7 L733.0 356.4 L733.7 360.8 L734.5 356.3 L735.3 358.3 L736.1 355.2 L736.9 355.0 L737.7 359.8 L738.4 350.6 L739.2 352.0 L740.0 355.7 L740.8 363.6 L741.6 351.3 L742.3 362.4 L743.1 350.2 L743.9 356.6 L744.7 355.6 L745.5 349.0 L746.2 357.0 L747.0 359.0 L747.8 354.3 L748.6 354.7 L749.4 357.9 L750.1 355.7 L750.9 358.4 L751.7 354.2 L752.5 353.0 L753.3 356.3 L754.1 353.5 L754.8 352.5 L755.6 349.3 L756.4 353.9 L757.2 352.0 L758.0 351.0 L758.7 352.4 L759.5 356.5 L760.3 352.8 L761.1 356.9 L761.9 360.9 L762.6 352.3 L763.4 356.9 L764.2 357.3 L765.0 354.7 L765.8 352.4 L766.5 356.3 L767.3 351.9 L768.1 359.0 L768.9 358.1 L769.7 357.8 L770.5 353.1 L771.2 355.7 L772.0 351.7 L772.8 355.3 L773.6 363.8 L774.4 355.5 L775.1 352.6 L775.9 353.5 L776.7 350.3 L777.5 356.2 L778.3 354.9 L779.0 354.9 L779.8 354.8 L780.6 359.5 L781.4 351.3 L782.2 360.6 L783.0 352.0 L783.7 358.3 L784.5 358.5 L785.3 348.4 L786.1 353.8 L786.9 360.3 L787.6 357.0 L788.4 357.9 L789.2 357.6 L790.0 357.0 L790.8 357.1 L791.5 351.4 L792.3 353.5 L793.1 357.5 L793.9 352.9 L794.7 359.6 L795.4 359.9 L796.2 359.5 L797.0 351.4 L797.8 351.2 L798.6 353.4 L799.4 351.5 L800.1 350.0 L800.9 353.8 L801.7 356.9 L802.5 354.5 L803.3 358.3 L804.0 356.3 L804.8 356.4 L805.6 353.8 L806.4 362.3 L807.2 358.4 L807.9 354.5 L808.7 350.4 L809.5 356.4 L810.3 358.0 L811.1 361.7 L811.8 354.2 L812.6 349.9 L813.4 354.9 L814.2 358.0 L815.0 356.1 L815.8 359.7 L816.5 355.9 L817.3 355.3 L818.1 351.2 L818.9 354.5 L819.7 355.7 L820.4 355.2 L821.2 352.8 L822.0 352.8" stroke="#d840e8" stroke-width="2.1" stroke-opacity="0.92"/>
</g>
<g fill="none" stroke-width="1.7">
<path d="M335.2 362 L335.2 566 L622 566" stroke="#c4be78"/>
<path d="M621.8 362 L621.8 566 L822 566" stroke="#6cc0c8"/>
</g>
</svg>
<div class="bt" style="left:3px;top:569px">Center 2.50000000 GHz</div>
<div class="bt" style="left:3px;top:587.5px">#Res BW 910 Hz</div>
<div class="bt" style="left:350px;top:569px">#Video BW 9.1 Hz</div>
<div class="bt" style="left:615px;top:569px;width:206px;text-align:right">Span 100.0 kHz</div>
<div class="bt" style="left:515px;top:587.5px;width:306px;text-align:right">#Sweep 20.0 s (1001 pts)</div>
<div id="hright"></div><div id="hright2"></div><div id="cyright"></div>
<div id="rdark"></div>
<div id="rlight"></div>
</body></html>
